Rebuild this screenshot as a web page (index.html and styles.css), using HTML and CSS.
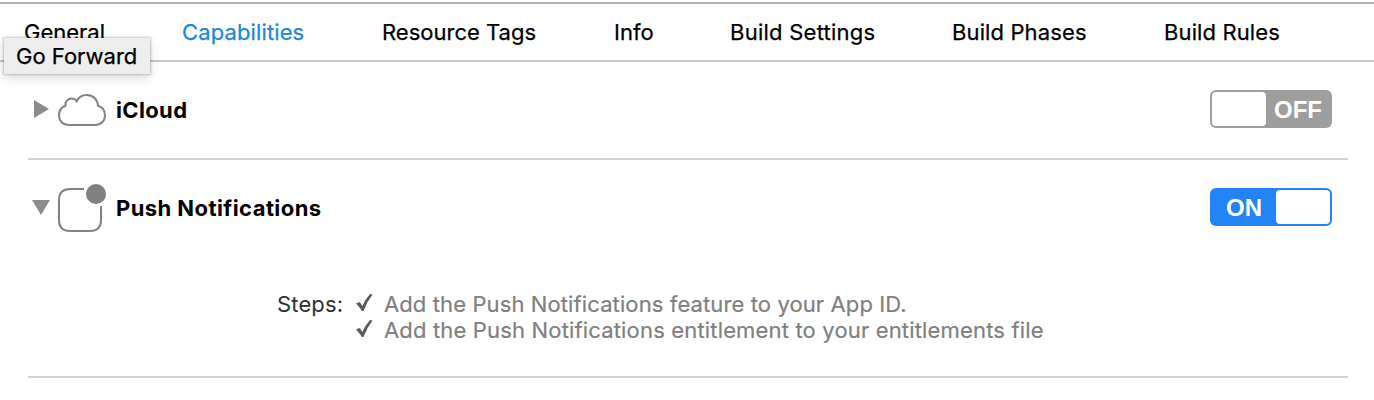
FILE: index.html
```html
<!DOCTYPE html>
<html lang="en">
<head>
<meta charset="utf-8">
<title>Capabilities</title>
<link rel="stylesheet" href="styles.css">
</head>
<body>
<nav class="tabs">
  <a class="tab tab-general">General</a>
  <a class="tab tab-active">Capabilities</a>
  <a class="tab tab-tags">Resource Tags</a>
  <a class="tab tab-info">Info</a>
  <a class="tab tab-settings">Build Settings</a>
  <a class="tab tab-phases">Build Phases</a>
  <a class="tab tab-rules">Build Rules</a>
  <div class="tooltip">Go Forward</div>
</nav>
<main class="capabilities">
  <section class="capability">
    <header class="row">
      <svg class="arrow" width="18" height="20" viewBox="0 0 18 20"><path d="M2 1L17 10L2 19Z"/></svg>
      <svg class="icon" width="50" height="46" viewBox="0 0 50 46"><path d="M13 39C6.700 39 3 34.800 3 29.500C3 24.500 6.100 21 9.500 19.800C9 15 12.200 12.500 15.600 12.500C18 12.500 19.600 13.500 20.700 15.200C22.700 11 26.400 9 30.500 9C37 9 41.800 13.300 42 19.800C46.200 20.900 49 24.700 49 29.400C49 34.800 44.800 39 39 39Z"/></svg>
      <h2 class="title title-cloud">iCloud</h2>
      <div class="switch switch-off"><span class="knob"></span><span class="state">OFF</span></div>
    </header>
  </section>
  <section class="capability capability-open">
    <header class="row">
      <svg class="arrow" width="18" height="20" viewBox="0 0 18 20"><path d="M0 3H18L9 18Z"/></svg>
      <svg class="icon" width="50" height="52" viewBox="0 0 50 52"><path d="M28 8H14Q3 8 3 19V39Q3 50 14 50H34Q45 50 45 39V25"/><circle class="badge" cx="40" cy="13" r="10"/></svg>
      <h2 class="title title-push">Push Notifications</h2>
      <div class="switch switch-on"><span class="state">ON</span><span class="knob"></span></div>
    </header>
    <div class="steps">
      <span class="steps-label">Steps:</span>
      <ul class="step-list">
        <li class="step"><svg class="check" width="18" height="20" viewBox="0 0 18 20"><path d="M0 10.500L3.500 9Q5 10.500 6.300 13Q9.500 6 14 1L16.500 1.500Q11 8.500 7.500 18H6Q3.500 14 0 10.500Z"/></svg><span class="step-text step-feature">Add the Push Notifications feature to your App ID.</span></li>
        <li class="step"><svg class="check" width="18" height="20" viewBox="0 0 18 20"><path d="M0 10.500L3.500 9Q5 10.500 6.300 13Q9.500 6 14 1L16.500 1.500Q11 8.500 7.500 18H6Q3.500 14 0 10.500Z"/></svg><span class="step-text step-entitlement">Add the Push Notifications entitlement to your entitlements file</span></li>
      </ul>
    </div>
  </section>
</main>
</body>
</html>
```
FILE: styles.css
```css
* { box-sizing: border-box; }
body {
  margin: 0;
  padding-top: 2px;
  height: 400px;
  overflow: hidden;
  background: #fff;
  color: #000;
  font: 22px/26px Inter, "Liberation Sans", sans-serif;
  white-space: nowrap;
}
.tabs {
  position: relative;
  display: grid;
  grid-template-columns: 158px 200px 232px 116px 222px 212px auto;
  align-items: center;
  height: 60px;
  padding-left: 24px;
  border-top: 2px solid #b2b2b2;
  border-bottom: 2px solid #c8c8c8;
}
.tab { -webkit-text-stroke: .25px currentColor; }
.tab-active { color: #2088dc; letter-spacing: .12px; }
.tab-settings { letter-spacing: .25px; }
.tab-phases, .tab-rules { letter-spacing: .12px; }
.tooltip {
  position: absolute;
  left: 4px;
  top: 34px;
  width: 146px;
  height: 36px;
  padding: 5px 0 0 12px;
  background: #eee;
  -webkit-text-stroke: .25px currentColor;
  box-shadow: 0 0 2px 1px rgba(0, 0, 0, .2), 0 4px 12px rgba(0, 0, 0, .14);
}
.capabilities { padding: 0 26px 0 28px; }
.capability {
  height: 98px;
  padding-top: 24px;
  border-bottom: 2px solid #d2d2d2;
}
.capability-open { height: 218px; }
.row {
  display: flex;
  align-items: center;
  height: 46px;
  padding: 0 16px 0 4px;
}
.arrow { fill: #8c8c8c; }
.icon {
  flex: none;
  margin-left: 6px;
  fill: none;
  stroke: #838383;
  stroke-width: 2;
}
.badge { fill: #808080; stroke: none; }
.title {
  margin: 0 auto 0 10px;
  padding-top: 2px;
  font-size: 22px;
  font-weight: 700;
}
.title-cloud { letter-spacing: .35px; }
.title-push { letter-spacing: .43px; }
.switch {
  display: flex;
  align-items: center;
  width: 122px;
  height: 38px;
  padding: 2px;
  border-radius: 6px;
  color: #fff;
  font: 700 24px/34px "Liberation Sans", Arial, sans-serif;
}
.switch-off { background: #9e9e9e; }
.switch-on { background: #2383f7; }
.knob { width: 54px; height: 34px; border-radius: 4px; background: #fff; }
.state { width: 64px; padding-top: 1px; text-align: center; }
.steps { display: flex; padding: 61px 0 0 249px; }
.steps-label { width: 79px; color: #303030; letter-spacing: .15px; }
.step-list { margin: 0; padding: 0; list-style: none; }
.step { display: flex; align-items: center; height: 26px; }
.check { margin-top: -2px; fill: #5a5a5a; }
.step-text { margin-left: 10px; color: #808080; -webkit-text-stroke: .2px currentColor; }
.step-feature { letter-spacing: .11px; }
.step-entitlement { letter-spacing: .165px; }
```
